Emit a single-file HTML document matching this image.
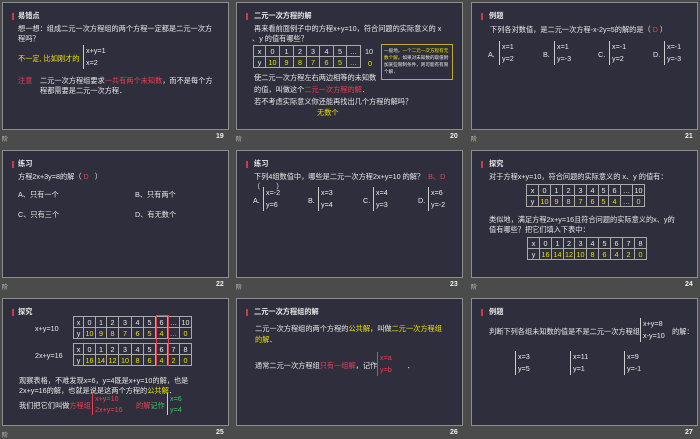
<!DOCTYPE html>
<html><head><meta charset="utf-8"><style>
*{margin:0;padding:0;box-sizing:border-box}
body{width:700px;height:438px;background:#4b4b4b;position:relative;overflow:hidden;font-family:"Liberation Sans","Noto Sans CJK SC",sans-serif;color:#e8e8e8}
.s{position:absolute;width:227px;height:128px;background:#2f2e3d;border:1px solid #8d8d8d}
.t{position:absolute;white-space:nowrap;font-size:7.2px;line-height:9px}
.h{font-weight:bold;font-size:7.2px}
.bar{position:absolute;left:9px;width:1.5px;height:7px;background:#d0394a}
.y{color:#e8e000}.r{color:#e8404f}.g{color:#38c860}
.n{position:absolute;font-size:7px;font-weight:bold;color:#eee}
.f{position:absolute;font-size:6px;color:#ccc}
.br{position:absolute;border-left:1px solid #ccc;font-size:7.2px;line-height:12px;padding-left:2px;white-space:nowrap}
table{position:absolute;border-collapse:collapse;font-size:7.2px}
td{border:1px solid #aaa;text-align:center;height:11px;padding:0;line-height:9px}
tr.yy td{color:#e8e000}
tr.yy td:first-child{color:#e8e8e8}
.box{position:absolute;border:1px solid #c0a838;font-size:4.6px;line-height:7px;padding:2px;white-space:normal}
</style></head><body>

<!-- Slide 19 -->
<div class="s" style="left:2px;top:2px">
<div class="bar" style="top:10px"></div>
<div class="t h" style="left:15px;top:8px">易错点</div>
<div class="t" style="left:15px;top:21px">想一想：组成二元一次方程组的两个方程一定都是二元一次方</div>
<div class="t" style="left:15px;top:31px">程吗？</div>
<div class="t y" style="left:15px;top:51px">不一定, 比如刚才的</div>
<div class="br" style="left:80px;top:42px">x+y=1<br>x=2</div>
<div class="t r" style="left:15px;top:73px">注意</div>
<div class="t" style="left:37px;top:73px">二元一次方程组要求<span class="r">一共有两个未知数</span>，而不是每个方</div>
<div class="t" style="left:37px;top:83px">程都需要是二元一次方程．</div>
</div>
<div class="f" style="left:2px;top:134px">阶</div><div class="n" style="left:216px;top:133px">19</div>

<!-- Slide 20 -->
<div class="s" style="left:236px;top:2px">
<div class="bar" style="top:10px"></div>
<div class="t h" style="left:17px;top:8px">二元一次方程的解</div>
<div class="t" style="left:17px;top:21px">再来看前面例子中的方程x+y=10，符合问题的实际意义的 x</div>
<div class="t" style="left:15px;top:31px">、y 的值有哪些？</div>
<table style="left:16px;top:42px"><tr><td style="width:12px">x</td><td style="width:14px">0</td><td style="width:14px">1</td><td style="width:13px">2</td><td style="width:13px">3</td><td style="width:14px">4</td><td style="width:13px">5</td><td style="width:14px">…</td></tr>
<tr class="yy"><td>y</td><td>10</td><td>9</td><td>8</td><td>7</td><td>6</td><td>5</td><td>…</td></tr></table>
<div class="t" style="left:128px;top:44px">10</div>
<div class="t y" style="left:131px;top:56px">0</div>
<div class="box" style="left:144px;top:41px;width:72px;height:36px">一般地，<span class="y">一个二元一次方程有无数个解</span>，如果对未知数的取值附加某些限制条件，则可能有有限个解．</div>
<div class="t" style="left:17px;top:70px">使二元一次方程左右两边相等的未知数</div>
<div class="t" style="left:17px;top:82px">的值，叫做这个<span class="r">二元一次方程的解</span>．</div>
<div class="t" style="left:17px;top:94px">若不考虑实际意义你还能再找出几个方程的解吗？</div>
<div class="t y" style="left:80px;top:105px">无数个</div>
</div>
<div class="f" style="left:236px;top:134px">阶</div><div class="n" style="left:450px;top:133px">20</div>

<!-- Slide 21 -->
<div class="s" style="left:471px;top:2px">
<div class="bar" style="top:10px"></div>
<div class="t h" style="left:17px;top:8px">例题</div>
<div class="t" style="left:18px;top:22px">下列各对数值，是二元一次方程-x-2y=5的解的是（ <span class="r">D</span> ）</div>
<div class="t" style="left:16px;top:47px">A.</div><div class="br" style="left:27px;top:38px">x=1<br>y=2</div>
<div class="t" style="left:71px;top:47px">B.</div><div class="br" style="left:82px;top:38px">x=1<br>y=-3</div>
<div class="t" style="left:126px;top:47px">C.</div><div class="br" style="left:137px;top:38px">x=-1<br>y=2</div>
<div class="t" style="left:181px;top:47px">D.</div><div class="br" style="left:192px;top:38px">x=-1<br>y=-3</div>
</div>
<div class="f" style="left:471px;top:134px">阶</div><div class="n" style="left:685px;top:133px">21</div>

<!-- Slide 22 -->
<div class="s" style="left:2px;top:150px">
<div class="bar" style="top:10px"></div>
<div class="t h" style="left:15px;top:8px">练习</div>
<div class="t" style="left:15px;top:21px">方程2x+3y=8的解（ <span class="r">D</span> &nbsp;&nbsp;）</div>
<div class="t" style="left:15px;top:39px">A、只有一个</div>
<div class="t" style="left:132px;top:39px">B、只有两个</div>
<div class="t" style="left:15px;top:59px">C、只有三个</div>
<div class="t" style="left:132px;top:59px">D、有无数个</div>
</div>
<div class="f" style="left:2px;top:282px">阶</div><div class="n" style="left:216px;top:281px">22</div>

<!-- Slide 23 -->
<div class="s" style="left:236px;top:150px">
<div class="bar" style="top:10px"></div>
<div class="t h" style="left:17px;top:8px">练习</div>
<div class="t" style="left:17px;top:21px">下列4组数值中，哪些是二元一次方程2x+y=10 的解？ &nbsp;<span class="r">B、D</span></div>
<div class="t" style="left:16px;top:31px">（ &nbsp;&nbsp;&nbsp;&nbsp;&nbsp;&nbsp;&nbsp;）</div>
<div class="t" style="left:16px;top:45px">A.</div><div class="br" style="left:26px;top:36px">x=-2<br>y=6</div>
<div class="t" style="left:71px;top:45px">B.</div><div class="br" style="left:81px;top:36px">x=3<br>y=4</div>
<div class="t" style="left:126px;top:45px">C.</div><div class="br" style="left:136px;top:36px">x=4<br>y=3</div>
<div class="t" style="left:181px;top:45px">D.</div><div class="br" style="left:191px;top:36px">x=6<br>y=-2</div>
</div>
<div class="f" style="left:236px;top:282px">阶</div><div class="n" style="left:450px;top:281px">23</div>

<!-- Slide 24 -->
<div class="s" style="left:471px;top:150px">
<div class="bar" style="top:10px"></div>
<div class="t h" style="left:17px;top:8px">探究</div>
<div class="t" style="left:17px;top:21px">对于方程x+y=10，符合问题的实际意义的 x、y 的值有：</div>
<table style="left:54px;top:33px"><tr><td style="width:12px">x</td><td style="width:12px">0</td><td style="width:12px">1</td><td style="width:12px">2</td><td style="width:12px">3</td><td style="width:12px">4</td><td style="width:10px">5</td><td style="width:12px">6</td><td style="width:12px">…</td><td style="width:12px">10</td></tr>
<tr class="yy"><td>y</td><td>10</td><td>9</td><td>8</td><td>7</td><td>6</td><td>5</td><td>4</td><td>…</td><td>0</td></tr></table>
<div class="t" style="left:17px;top:64px">类似地，满足方程2x+y=16且符合问题的实际意义的x、y的</div>
<div class="t" style="left:17px;top:74px">值有哪些？把它们填入下表中：</div>
<table style="left:55px;top:86px"><tr><td style="width:12px">x</td><td style="width:12px">0</td><td style="width:12px">1</td><td style="width:11px">2</td><td style="width:12px">3</td><td style="width:12px">4</td><td style="width:12px">5</td><td style="width:12px">6</td><td style="width:12px">7</td><td style="width:12px">8</td></tr>
<tr class="yy"><td>y</td><td>16</td><td>14</td><td>12</td><td>10</td><td>8</td><td>6</td><td>4</td><td>2</td><td>0</td></tr></table>
</div>
<div class="f" style="left:471px;top:282px">阶</div><div class="n" style="left:685px;top:281px">24</div>

<!-- Slide 25 -->
<div class="s" style="left:2px;top:298px">
<div class="bar" style="top:10px"></div>
<div class="t h" style="left:15px;top:8px">探究</div>
<div class="t" style="left:32px;top:25px">x+y=10</div>
<table style="left:70px;top:17px"><tr><td style="width:10px">x</td><td style="width:12px">0</td><td style="width:11px">1</td><td style="width:12px">2</td><td style="width:13px">3</td><td style="width:12px">4</td><td style="width:12px">5</td><td style="width:12px">6</td><td style="width:12px">…</td><td style="width:12px">10</td></tr>
<tr class="yy"><td>y</td><td>10</td><td>9</td><td>8</td><td>7</td><td>6</td><td>5</td><td>4</td><td>…</td><td>0</td></tr></table>
<div class="t" style="left:32px;top:52px">2x+y=16</div>
<table style="left:70px;top:44px"><tr><td style="width:10px">x</td><td style="width:12px">0</td><td style="width:11px">1</td><td style="width:12px">2</td><td style="width:13px">3</td><td style="width:12px">4</td><td style="width:12px">5</td><td style="width:12px">6</td><td style="width:12px">7</td><td style="width:12px">8</td></tr>
<tr class="yy"><td>y</td><td>16</td><td>14</td><td>12</td><td>10</td><td>8</td><td>6</td><td>4</td><td>2</td><td>0</td></tr></table>
<div style="position:absolute;left:153px;top:16px;width:13px;height:51px;border:1px solid #e8404f"></div>
<div class="t" style="left:16px;top:77px">观察表格，不难发现x=6，y=4既是x+y=10的解，也是</div>
<div class="t" style="left:16px;top:87px">2x+y=16的解，也就是说是这两个方程的<span class="y">公共解</span>．</div>
<div class="t" style="left:16px;top:102px">我们把它们叫做<span class="r">方程组</span></div>
<div class="br r" style="left:89px;top:94px;border-color:#e8404f;line-height:11px">x+y=10<br>2x+y=16</div>
<div class="t" style="left:133px;top:102px"><span class="r">的解</span><span class="g">记作</span></div>
<div class="br g" style="left:164px;top:94px;line-height:11px">x=6<br>y=4</div>
</div>
<div class="f" style="left:2px;top:430px">阶</div><div class="n" style="left:216px;top:429px">25</div>

<!-- Slide 26 -->
<div class="s" style="left:236px;top:298px">
<div class="bar" style="top:10px"></div>
<div class="t h" style="left:17px;top:8px">二元一次方程组的解</div>
<div class="t" style="left:18px;top:25px">二元一次方程组的两个方程的<span class="y">公共解</span>，叫做<span class="y">二元一次方程组</span></div>
<div class="t y" style="left:18px;top:36px">的解<span style="color:#e8e8e8">．</span></div>
<div class="t" style="left:18px;top:62px">通常二元一次方程组<span class="r">只有一组解</span>，记作</div>
<div class="br r" style="left:140px;top:53px;border-color:#e8404f">x=a<br>y=b</div>
<div class="t" style="left:170px;top:62px">．</div>
</div>
<div class="n" style="left:450px;top:429px">26</div>

<!-- Slide 27 -->
<div class="s" style="left:471px;top:298px">
<div class="bar" style="top:10px"></div>
<div class="t h" style="left:17px;top:8px">例题</div>
<div class="t" style="left:17px;top:28px">判断下列各组未知数的值是不是二元一次方程组</div>
<div class="br" style="left:168px;top:19px">x+y=8<br>x-y=10</div>
<div class="t" style="left:200px;top:28px">的解：</div>
<div class="br" style="left:43px;top:52px">x=3<br>y=5</div>
<div class="br" style="left:98px;top:52px">x=11<br>y=1</div>
<div class="br" style="left:152px;top:52px">x=9<br>y=-1</div>
</div>
<div class="n" style="left:685px;top:429px">27</div>

</body></html>
